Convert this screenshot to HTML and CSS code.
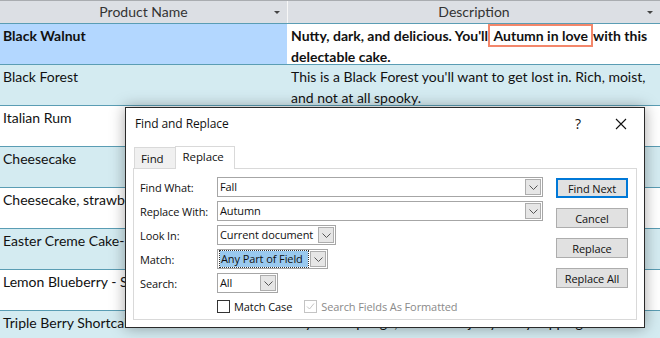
FILE: index.html
```html
<!DOCTYPE html>
<html lang="en">
<head>
    <meta charset="UTF-8">
    <title>Products - Find and Replace</title>
    <link rel="stylesheet" href="styles.css">
</head>
<body>
    <main class="sheet">
        <div class="head">
            <div class="hcell">Product Name<span class="sort"></span></div>
            <div class="hcell">Description<span class="sort"></span></div>
        </div>
        <div class="row current">
            <div class="cell name">Black Walnut</div>
            <div class="cell desc">Nutty, dark, and delicious. You'll <span class="hit">Autumn in love</span> with this delectable cake.</div>
        </div>
        <div class="row alt">
            <div class="cell name">Black Forest</div>
            <div class="cell desc">This is a Black Forest you'll want to get lost in. Rich, moist, and not at all spooky.</div>
        </div>
        <div class="row">
            <div class="cell name">Italian Rum</div>
            <div class="cell desc">A classic cake with a splash of rum.</div>
        </div>
        <div class="row alt">
            <div class="cell name">Cheesecake</div>
            <div class="cell desc">Creamy and smooth, just like mom's.</div>
        </div>
        <div class="row">
            <div class="cell name">Cheesecake, strawberry</div>
            <div class="cell desc">Our cheesecake topped with berries.</div>
        </div>
        <div class="row alt">
            <div class="cell name">Easter Creme Cake-Pops</div>
            <div class="cell desc">Bite-sized treats for the spring.</div>
        </div>
        <div class="row">
            <div class="cell name">Lemon Blueberry - Summer</div>
            <div class="cell desc">Bright lemon with fresh blueberries.</div>
        </div>
        <div class="row alt">
            <div class="cell name">Triple Berry Shortcake</div>
            <div class="cell desc">Layers of sponge, cream and juicy berry topping.</div>
        </div>
    </main>

    <section class="dialog" aria-labelledby="dlg-title">
        <header class="titlebar">
            <h1 id="dlg-title">Find and Replace</h1>
            <span class="help">?</span>
            <svg class="close" width="12" height="12" viewBox="0 0 12 12">
                <path d="M1 1 L11 11 M11 1 L1 11" stroke="#111" stroke-width="1.1" fill="none"/>
            </svg>
        </header>
        <div class="tabs">
            <span class="tab">Find</span>
            <span class="tab active">Replace</span>
        </div>
        <div class="panel">
            <div class="fields">
                <div class="field">
                    <label>Find What:</label>
                    <div class="combo wide"><span class="val">Fall</span><span class="drop"><svg width="9" height="5" viewBox="0 0 9 5"><path d="M0.5 0.5 L4.5 4.5 L8.5 0.5" stroke="#555" fill="none"/></svg></span></div>
                </div>
                <div class="field">
                    <label>Replace With:</label>
                    <div class="combo wide"><span class="val">Autumn</span><span class="drop"><svg width="9" height="5" viewBox="0 0 9 5"><path d="M0.5 0.5 L4.5 4.5 L8.5 0.5" stroke="#555" fill="none"/></svg></span></div>
                </div>
                <div class="field">
                    <label>Look In:</label>
                    <div class="combo look"><span class="val">Current document</span><span class="drop"><svg width="9" height="5" viewBox="0 0 9 5"><path d="M0.5 0.5 L4.5 4.5 L8.5 0.5" stroke="#555" fill="none"/></svg></span></div>
                </div>
                <div class="field">
                    <label>Match:</label>
                    <div class="combo match"><span class="val picked">Any Part of Field</span><span class="drop"><svg width="9" height="5" viewBox="0 0 9 5"><path d="M0.5 0.5 L4.5 4.5 L8.5 0.5" stroke="#555" fill="none"/></svg></span></div>
                </div>
                <div class="field">
                    <label>Search:</label>
                    <div class="combo search"><span class="val">All</span><span class="drop"><svg width="9" height="5" viewBox="0 0 9 5"><path d="M0.5 0.5 L4.5 4.5 L8.5 0.5" stroke="#555" fill="none"/></svg></span></div>
                </div>
                <div class="checks">
                    <span class="check"><span class="box"></span>Match Case</span>
                    <span class="check off"><span class="box"><svg width="11" height="11" viewBox="0 0 11 11"><path d="M2 5.5 L4.5 8 L9 2.5" stroke="#c4c4c4" fill="none"/></svg></span>Search Fields As Formatted</span>
                </div>
            </div>
            <div class="buttons">
                <button class="btn default">Find Next</button>
                <button class="btn">Cancel</button>
                <button class="btn">Replace</button>
                <button class="btn">Replace All</button>
            </div>
        </div>
    </section>
</body>
</html>
```

FILE: styles.css
```css
body {
    margin: 0;
    padding: 0;
    width: 660px;
    height: 338px;
    overflow: hidden;
    position: relative;
    font-family: "Lato", "Liberation Sans", sans-serif;
    color: #111;
    background: #fff;
}

.sheet {
    display: flex;
    flex-direction: column;
}

.head {
    display: grid;
    grid-template-columns: 287px 1fr;
    column-gap: 1px;
    background: #f7f7f7;
    border-top: 1px solid #a9acb0;
    border-bottom: 1px solid #5a9db4;
    box-sizing: border-box;
    height: 24px;
}

.hcell {
    position: relative;
    background: #dcdfe4;
    text-align: center;
    font-size: 14px;
    line-height: 22px;
    color: #333;
}

.sort {
    position: absolute;
    right: 7px;
    top: 10px;
    border-left: 3px solid transparent;
    border-right: 3px solid transparent;
    border-top: 3px solid #444;
}

.row {
    display: grid;
    grid-template-columns: 287px 1fr;
    column-gap: 1px;
    height: 41px;
    box-sizing: border-box;
    border-bottom: 1px solid #5a9db4;
    background: #fff;
}

.row.alt {
    background: #d4ebf1;
}

.cell {
    padding: 1px 3px 0;
    font-size: 14px;
    line-height: 21px;
    overflow: hidden;
}

.name {
    white-space: nowrap;
}

.current .name {
    background: #b3d7ff;
    font-weight: bold;
}

.current .desc {
    background: #fff;
    font-weight: bold;
}

.hit {
    outline: 2px solid #f3876b;
    outline-offset: 1px;
    background: #fff;
    padding: 0 2px;
}

/* dialog */
.dialog {
    position: absolute;
    left: 125px;
    top: 107px;
    width: 520px;
    height: 221px;
    box-sizing: border-box;
    background: #fff;
    border: 1px solid #2a2a2a;
    box-shadow: 0 0 14px rgba(0, 0, 0, 0.35);
    font-family: "Open Sans", "Noto Sans", sans-serif;
    font-size: 11px;
    letter-spacing: -0.1px;
    color: #111;
    display: flex;
    flex-direction: column;
    padding: 0 7px 7px;
}

.titlebar {
    display: flex;
    align-items: center;
    height: 31px;
    padding-left: 2px;
}

.titlebar h1 {
    margin: 0;
    font-size: 12px;
    font-weight: normal;
    flex: 1;
}

.help {
    font-size: 14px;
    margin-right: 34px;
}

.close {
    margin-right: 10px;
}

.tabs {
    display: flex;
    align-items: flex-end;
    height: 29px;
    padding-left: 1px;
}

.tab {
    border: 1px solid #d9d9d9;
    border-bottom: none;
    background: #f0f0f0;
    height: 20px;
    line-height: 21px;
    padding: 0 11px 0 6px;
    font-size: 11.5px;
}

.tab.active {
    background: #fff;
    height: 22px;
    line-height: 19px;
    padding: 0 10px 0 7px;
    margin-left: -1px;
    margin-bottom: -1px;
    position: relative;
}

.panel {
    flex: 1;
    border: 1px solid #d9d9d9;
    display: flex;
    padding: 8px 8px 0 6px;
    gap: 13px;
}

.fields {
    display: flex;
    flex-direction: column;
    gap: 4px;
}

.field {
    display: flex;
    align-items: center;
    height: 20px;
}

.field label {
    width: 77px;
}

.combo {
    display: flex;
    align-items: center;
    height: 20px;
    box-sizing: border-box;
    border: 1px solid #a6a6a6;
    padding: 0 1px 0 2px;
}

.combo.wide { width: 326px; }
.combo.look { width: 119px; }
.combo.match { width: 111px; }
.combo.search { width: 61px; }

.val {
    flex: 1;
    white-space: nowrap;
    line-height: 16px;
}

.val.picked {
    background: #99c9ef;
    outline: 1px dotted #333;
    margin-right: 2px;
    padding-left: 1px;
}

.drop {
    display: flex;
    align-items: center;
    justify-content: center;
    width: 14px;
    height: 14px;
    background: #e6e6e6;
    border: 1px solid #adadad;
}

.checks {
    display: flex;
    align-items: center;
    gap: 12px;
    margin-left: 77px;
    margin-top: 1px;
    height: 16px;
}

.check {
    display: flex;
    align-items: center;
    gap: 4px;
}

.box {
    width: 11px;
    height: 11px;
    border: 1px solid #333;
    display: flex;
}

.check.off {
    color: #8a8a8a;
}

.check.off .box {
    border-color: #c4c4c4;
}

.buttons {
    display: flex;
    flex-direction: column;
    gap: 10px;
    padding-top: 1px;
}

.btn {
    width: 72px;
    height: 20px;
    padding: 0;
    font: inherit;
    letter-spacing: inherit;
    color: #111;
    background: #e1e1e1;
    border: 1px solid #adadad;
}

.btn.default {
    border: 2px solid #0078d7;
}
```
